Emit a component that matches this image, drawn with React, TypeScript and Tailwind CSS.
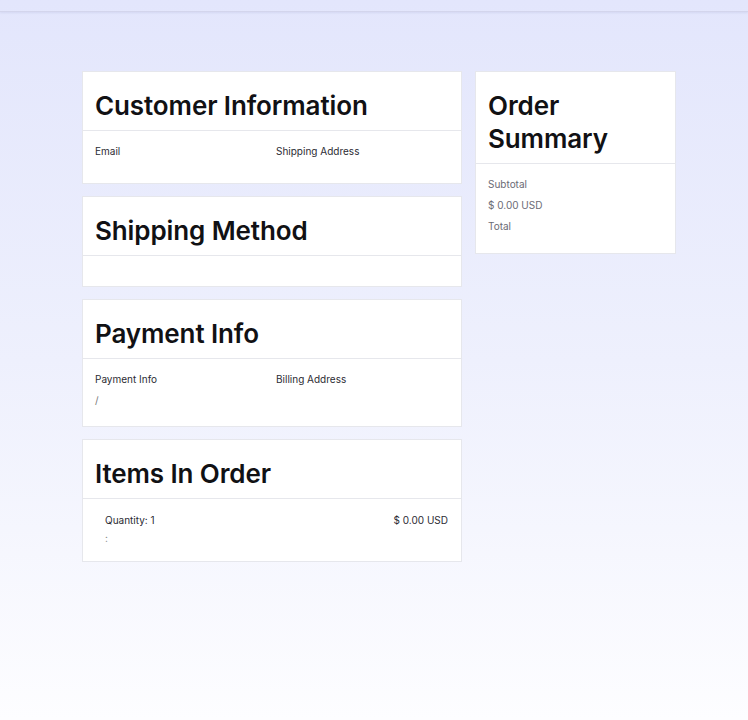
const font = { fontFamily: 'Inter, "Noto Sans", sans-serif' }

function CardHead({ title }: { title: string }) {
  return (
    <div className="border-b border-[#e6e7ec] px-3 pt-[17px] pb-[8px]">
      <h2 className="text-[26px] leading-[33px] font-semibold tracking-[-0.004em] text-[#111114]">{title}</h2>
    </div>
  )
}

export default function App() {
  return (
    <div
      className="min-h-[720px] bg-gradient-to-b from-[#e3e6fc] via-[#eef0fd] to-[#fdfdff]"
      style={font}
    >
      <div className="h-[12px] border-b border-[#d3d5ec] shadow-[0_1px_2px_rgba(120,125,180,0.15)]" />
      <div className="ml-[82px] mt-[59px] flex items-start gap-[13px]">
        <div className="flex w-[380px] flex-col gap-[12px]">
          <div className="border border-[#e6e7ec] bg-white">
            <CardHead title="Customer Information" />
            <div className="grid grid-cols-2 px-3 pt-[10px] pb-[22px] text-[10px] leading-[20px] text-[#2b2b33]">
              <div>Email</div>
              <div className="pl-[4px]">Shipping Address</div>
            </div>
          </div>
          <div className="border border-[#e6e7ec] bg-white">
            <CardHead title="Shipping Method" />
            <div className="h-[30px]" />
          </div>
          <div className="border border-[#e6e7ec] bg-white">
            <CardHead title="Payment Info" />
            <div className="grid grid-cols-2 px-3 pt-[10px] pb-[16px] text-[10px] leading-[20px] text-[#2b2b33]">
              <div>
                <div>Payment Info</div>
                <div className="mt-[1px] text-[#777]">/</div>
              </div>
              <div className="pl-[4px]">Billing Address</div>
            </div>
          </div>
          <div className="border border-[#e6e7ec] bg-white">
            <CardHead title="Items In Order" />
            <div className="flex justify-between pt-[11px] pr-[13px] pb-[15px] pl-[22px] text-[10px] text-[#2b2b33]">
              <div>
                <div className="leading-[20px]">Quantity: 1</div>
                <div className="leading-[16px] text-[#888]">:</div>
              </div>
              <div className="leading-[20px]">$ 0.00 USD</div>
            </div>
          </div>
        </div>
        <div className="w-[201px] border border-[#e6e7ec] bg-white">
          <CardHead title="Order Summary" />
          <div className="px-3 pt-[10px] pb-[16px] text-[10px] leading-[21px] text-[#6b6b75]">
            <div>Subtotal</div>
            <div>$ 0.00 USD</div>
            <div>Total</div>
          </div>
        </div>
      </div>
    </div>
  )
}
